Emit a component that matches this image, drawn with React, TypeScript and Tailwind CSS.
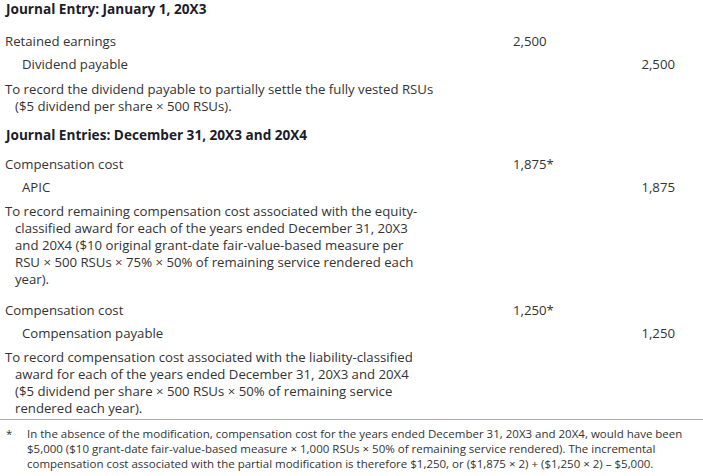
import type { ReactNode } from "react";

type Row = { label: string; debit?: string; credit?: string; indent?: boolean };

function EntryRow({ label, debit, credit, indent }: Row) {
  return (
    <div className="flex h-[23px] items-center">
      <div className={`w-[508px] ${indent ? "pl-[17px]" : ""}`}>{label}</div>
      <div className="w-[100px]">{debit}</div>
      <div className="w-[62px] text-right">{credit}</div>
    </div>
  );
}

// explanation under each entry; lines broken where the source breaks them
function Note({ lines, className = "" }: { lines: string[]; className?: string }) {
  return (
    <p className={`leading-[17px] whitespace-nowrap ${className}`}>
      {lines.map((line, i) => (
        <span key={i} className={`block ${i > 0 ? "pl-[10px]" : ""}`}>
          {line}
        </span>
      ))}
    </p>
  );
}

function Heading({ children }: { children: ReactNode }) {
  return (
    <h2 className="pl-px text-[13.6px] leading-[20px] font-bold text-[#1c1c2b]">{children}</h2>
  );
}

export default function App() {
  return (
    <div
      className="h-[476px] w-[703px] bg-white text-[13.2px] text-[#333333]"
      style={{ fontFamily: '"Open Sans", "Liberation Sans", sans-serif' }}
    >
      <div className="px-[5px]">
        <div className="-mt-px">
          <Heading>Journal Entry: January 1, 20X3</Heading>
        </div>
        <div className="mt-[11px]">
          <EntryRow label="Retained earnings" debit="2,500" />
          <EntryRow label="Dividend payable" credit="2,500" indent />
        </div>
        <Note
          className="mt-[5px]"
          lines={[
            "To record the dividend payable to partially settle the fully vested RSUs",
            "($5 dividend per share × 500 RSUs).",
          ]}
        />
        <div className="mt-[10px]">
          <Heading>Journal Entries: December 31, 20X3 and 20X4</Heading>
        </div>
        <div className="mt-[8px]">
          <EntryRow label="Compensation cost" debit="1,875*" />
          <EntryRow label="APIC" credit="1,875" indent />
        </div>
        <Note
          className="mt-[4px]"
          lines={[
            "To record remaining compensation cost associated with the equity-",
            "classified award for each of the years ended December 31, 20X3",
            "and 20X4 ($10 original grant-date fair-value-based measure per",
            "RSU × 500 RSUs × 75% × 50% of remaining service rendered each",
            "year).",
          ]}
        />
        <div className="mt-[11px]">
          <EntryRow label="Compensation cost" debit="1,250*" />
          <EntryRow label="Compensation payable" credit="1,250" indent />
        </div>
        <Note
          className="mt-[4px]"
          lines={[
            "To record compensation cost associated with the liability-classified",
            "award for each of the years ended December 31, 20X3 and 20X4",
            "($5 dividend per share × 500 RSUs × 50% of remaining service",
            "rendered each year).",
          ]}
        />
      </div>
      <div className="mt-[2px] border-t border-[#aaaaaa] pt-[6px]">
        <div className="flex text-[11.5px] leading-[15px]">
          <div className="w-[27px] pl-[6px]">*</div>
          <p className="w-[670px]">
            In the absence of the modification, compensation cost for the years ended December 31,
            20X3 and 20X4, would have been $5,000 ($10 grant-date fair-value-based measure × 1,000
            RSUs × 50% of remaining service rendered). The incremental compensation cost associated
            with the partial modification is therefore $1,250, or ($1,875 × 2) + ($1,250 × 2) –
            $5,000.
          </p>
        </div>
      </div>
    </div>
  );
}
